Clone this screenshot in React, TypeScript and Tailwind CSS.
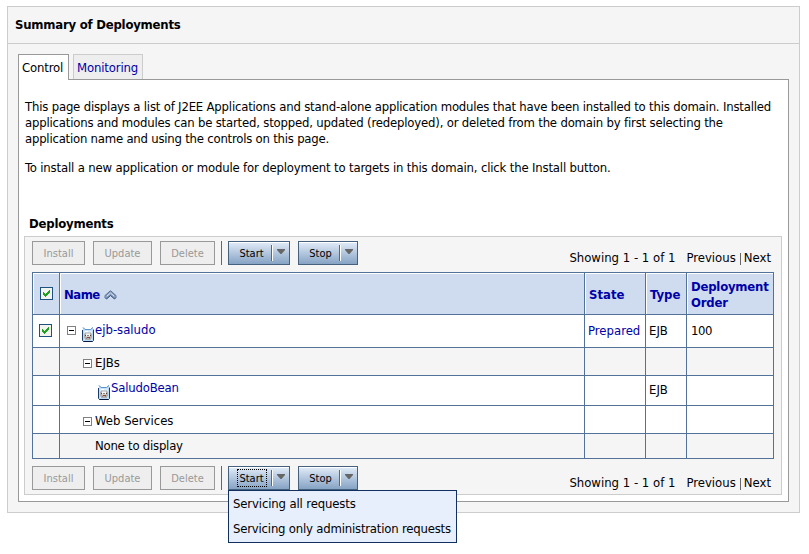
import React from "react";

const FONT = "font-['DejaVu_Sans_Condensed','DejaVu_Sans',sans-serif]";

function CheckBox() {
  return (
    <svg width="13" height="13" viewBox="0 0 13 13" className="block shrink-0" shapeRendering="crispEdges">
      <rect x="0.5" y="0.5" width="12" height="12" fill="#f3f3ef" stroke="#1c5180" />
      <path
        d="M9 3h1v3H9v1H8v1H7v1H6v1H5V9H4V8H3V5h1v1h1v1h1V6h1V5h1V4h1z"
        fill="#21a121"
      />
    </svg>
  );
}

function Minus() {
  return (
    <svg width="9" height="9" viewBox="0 0 9 9" className="block shrink-0" shapeRendering="crispEdges">
      <rect x="0.5" y="0.5" width="8" height="8" fill="#fff" stroke="#808080" />
      <path d="M2 4.5h5" stroke="#000" />
    </svg>
  );
}

function BeanIcon() {
  return (
    <svg width="12" height="15" viewBox="0 0 12 15" className="block shrink-0">
      <path d="M1 0.500h1l1.500 1.500h5L10 0.500h1v13l-1 1H1.500l-1-1V4z" fill="#b9dcf8" />
      <path d="M0.500 3v10.500l1 1h9l1-1V2.500" fill="none" stroke="#1b3c6e" />
      <path d="M1.500 14.500h9" stroke="#071a3c" />
      <path d="M1 0.500l2 2h5.500l2.500-2" fill="none" stroke="#5f92c8" />
      <path d="M2 3.500h8v9.500H2z" fill="#d9ecfc" />
      <path d="M3 4.500h3" stroke="#fff" />
      <path d="M3 5.500h6v1h1v5h-1v1.500H3V11.500H2v-5h1z" fill="#b3b0ae" />
      <path d="M4 6.500h4v3H4z" fill="#f4f4f4" />
      <path d="M3 8.500h1M8 8.500h1" stroke="#5c4038" />
      <path d="M5 8.500h2M4 11.500h1M7 11.500h1" stroke="#8c8784" />
      <path d="M5 10.500h3" stroke="#8d4a3c" />
    </svg>
  );
}

function SortIcon() {
  return (
    <svg width="13" height="10" viewBox="0 0 13 10" className="block shrink-0">
      <path d="M0.500 6L6.500 0.700L12.500 6V7.500L10.500 9L6.500 5.500L2.500 9L0.500 7.500z" fill="#8398b8" />
      <path d="M0.500 6L6.500 0.700L12.500 6" fill="none" stroke="#5872a0" />
      <path d="M2.800 6.300L6.500 3L10.200 6.300" fill="none" stroke="#e4ecf8" />
      <path d="M1 7.500L2.500 9L6.500 5.500L10.500 9L12 7.500" fill="none" stroke="#2f4c7a" />
    </svg>
  );
}

function Disabled({ children, className }: { children: React.ReactNode; className: string }) {
  return (
    <button disabled className={`h-6 shrink-0 border border-[#999] bg-[#eee] pt-px text-[11px] leading-none text-[#999] ${className}`}>
      {children}
    </button>
  );
}

function Split({ label, className, focused }: { label: string; className: string; focused?: boolean }) {
  return (
    <button className={`flex h-6 shrink-0 items-center border border-[#45617d] bg-linear-to-b from-[#e2ecf8] to-[#86a3c4] pr-1 text-[11px] leading-none text-black shadow-[inset_0_1px_0_#fff] ${className}`}>
      <span className={`flex h-[18px] w-[30px] items-center justify-center border pt-px pr-px ${focused ? "border-dotted border-black" : "border-transparent"}`}>{label}</span>
      <span className="ml-auto h-4 w-0.5 border-r border-l border-r-white border-l-[#666]" />
      <svg width="8" height="5" viewBox="0 0 8 5" className="mb-[3px] ml-1 block">
        <path d="M0 0h8v1L4.500 5h-1L0 1z" fill="#666" />
      </svg>
    </button>
  );
}

function Toolbar({ open }: { open?: boolean }) {
  return (
    <div className="flex h-6 items-start">
      <Disabled className="w-[53px]">Install</Disabled>
      <Disabled className="ml-2 w-[59px]">Update</Disabled>
      <Disabled className="ml-2 w-[55px]">Delete</Disabled>
      <span className="ml-1.5 h-6 w-px bg-[#666]" />
      <div className="relative ml-1.5">
        <Split label="Start" className="w-[62px] pl-[8px]" focused={open} />
        {open && (
          <div className="absolute top-6 left-0 z-10 h-[53px] w-[229px] border border-[#12305f] bg-[#e8effc] pl-1 whitespace-nowrap">
            <div className="pt-[5px] leading-4 tracking-[-0.14px]">Servicing all requests</div>
            <div className="pt-[9px] leading-4 tracking-[-0.2px]">Servicing only administration requests</div>
          </div>
        )}
      </div>
      <Split label="Stop" className="ml-2 w-[60px] pl-[7px]" />
      <div className="ml-auto flex items-center pt-[9px] pr-[3px] leading-4 tracking-normal">
        <span>Showing 1 - 1 of 1</span>
        <span className="ml-[11px]">Previous</span>
        <span className="mt-px mr-[3px] ml-1 h-3 w-px bg-[#666]" />
        <span>Next</span>
      </div>
    </div>
  );
}

function Cell({ children, className = "" }: { children?: React.ReactNode; className?: string }) {
  return <div className={`border-r border-b border-[#527299] leading-4 whitespace-nowrap ${className}`}>{children}</div>;
}

const HEAD = "bg-[#cfdbee] shadow-[inset_1px_1px_0_#fff] font-bold text-[#0000a8] flex items-center";

export default function App() {
  return (
    <div className={`h-[554px] w-[809px] overflow-hidden bg-white pt-1.5 pl-[7px] text-[13px] text-black ${FONT}`}>
      <div className="h-[507px] w-[793px] border border-[#ccc] bg-[#f5f5f5]">
        <div className="h-[37px] border-b border-[#ccc] pt-[10px] pl-[7px] leading-4 font-bold tracking-[-0.22px]">Summary of Deployments</div>
        <div className="pt-[10px] pl-[10px]">
          <div className="relative z-[1] -mb-px flex h-[26px] tracking-[-0.15px]">
            <div className="w-[51px] border border-b-0 border-[#999] bg-white pt-[5px] pl-[3px] leading-4">Control</div>
            <div className="ml-1 h-[25px] w-[70px] border border-b-0 border-[#ccc] bg-[#eee] pt-[5px] pl-[3px] leading-4 text-[#0000a8]">Monitoring</div>
          </div>
          <div className="h-[423px] w-[771px] border border-[#999] bg-white pt-[19px] pl-[5px]">
            <div className="pl-px leading-4 tracking-[-0.19px] whitespace-nowrap">
              <p>This page displays a list of J2EE Applications and stand-alone application modules that have been installed to this domain. Installed</p>
              <p>applications and modules can be started, stopped, updated (redeployed), or deleted from the domain by first selecting the</p>
              <p className="tracking-[-0.22px]">application name and using the controls on this page.</p>
              <p className="mt-[13px] tracking-[-0.17px]">To install a new application or module for deployment to targets in this domain, click the Install button.</p>
            </div>
            <h2 className="mt-[40px] h-5 pl-[5px] leading-4 font-bold tracking-[-0.2px]">Deployments</h2>
            <div className="h-[259px] w-[758px] border border-[#ccc] bg-[#f5f5f5] pt-1 pr-[7px] pl-[7px]">
              <Toolbar />
              <div className="mt-[7px] mb-[7px] grid w-[742px] grid-cols-[27px_525px_61px_41px_87px] grid-rows-[42px_33px_28px_30px_28px_25px] border-t border-l border-[#527299] bg-white">
                <Cell className={`${HEAD} pl-[7px]`}><CheckBox /></Cell>
                <Cell className={`${HEAD} gap-1 pt-0.5 pl-1 tracking-[-0.5px]`}>Name <SortIcon /></Cell>
                <Cell className={`${HEAD} pt-0.5 pl-1`}>State</Cell>
                <Cell className={`${HEAD} pt-0.5 pl-1`}>Type</Cell>
                <Cell className={`${HEAD} pt-0.5 pl-1 tracking-[-0.22px]`}>Deployment<br />Order</Cell>

                <Cell className="pt-[9px] pl-1.5"><CheckBox /></Cell>
                <Cell className="flex items-start pl-[7px]">
                  <span className="mt-[11px]"><Minus /></span>
                  <span className="mt-3 ml-1.5"><BeanIcon /></span>
                  <span className="mt-[7px] ml-px text-[#0000a8]">ejb-saludo</span>
                </Cell>
                <Cell className="pt-[8px] pl-[3px] text-[#0000a8]">Prepared</Cell>
                <Cell className="pt-[8px] pl-[3px]">EJB</Cell>
                <Cell className="pt-[8px] pl-1 tracking-[-0.5px]">100</Cell>

                <Cell className="bg-[#f5f5f5]" />
                <Cell className="flex items-start bg-[#f5f5f5] pl-[23px]">
                  <span className="mt-[11px]"><Minus /></span>
                  <span className="mt-[7px] ml-[3px]">EJBs</span>
                </Cell>
                <Cell className="bg-[#f5f5f5]" />
                <Cell className="bg-[#f5f5f5]" />
                <Cell className="bg-[#f5f5f5]" />

                <Cell />
                <Cell className="flex items-start pl-[38px]">
                  <span className="mt-[9px]"><BeanIcon /></span>
                  <span className="mt-1 ml-px tracking-[-0.18px] text-[#0000a8]">SaludoBean</span>
                </Cell>
                <Cell />
                <Cell className="pt-[6px] pl-[3px]">EJB</Cell>
                <Cell />

                <Cell />
                <Cell className="flex items-start pl-[23px]">
                  <span className="mt-[11px]"><Minus /></span>
                  <span className="mt-[7px] ml-[3px]">Web Services</span>
                </Cell>
                <Cell />
                <Cell />
                <Cell />

                <Cell className="bg-[#f5f5f5]" />
                <Cell className="bg-[#f5f5f5] pt-[4px] pl-[35px] tracking-[-0.23px]">None to display</Cell>
                <Cell className="bg-[#f5f5f5]" />
                <Cell className="bg-[#f5f5f5]" />
                <Cell className="bg-[#f5f5f5]" />
              </div>
              <Toolbar open />
            </div>
          </div>
        </div>
      </div>
    </div>
  );
}
